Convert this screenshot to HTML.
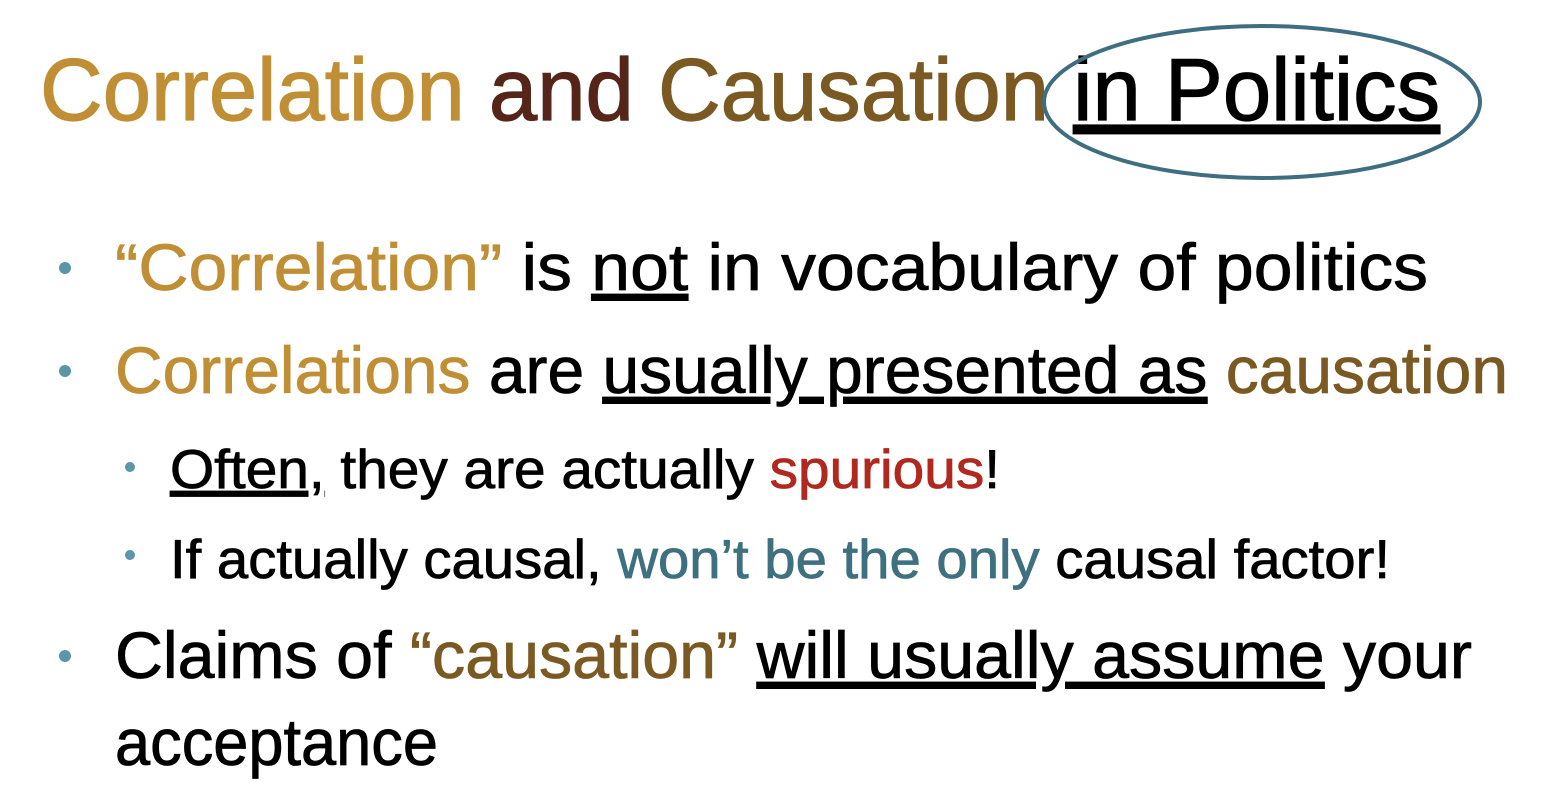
<!DOCTYPE html>
<html><head><meta charset="utf-8"><style>
html,body{margin:0;padding:0;background:#fff;width:1554px;height:798px;overflow:hidden}
svg{display:block}
text{font-family:"Liberation Sans",sans-serif}
.u{text-decoration:underline}
</style></head><body>
<svg width="1554" height="798" viewBox="0 0 1554 798">
<text x="40" y="120" font-size="88" stroke-width="1.2" textLength="1400" lengthAdjust="spacingAndGlyphs"><tspan fill="#C08F35" stroke="#C08F35">Correlation </tspan><tspan fill="#55251A" stroke="#55251A">and </tspan><tspan fill="#7A5A22" stroke="#7A5A22">Causation </tspan><tspan fill="#000" stroke="#000" class="u">in Politics</tspan></text>
<ellipse cx="1262" cy="102" rx="218" ry="76" fill="none" stroke="#3E6E80" stroke-width="4"/>
<g fill="#5A96A8"><circle cx="65" cy="268" r="6"/><circle cx="65" cy="371" r="6"/><circle cx="130" cy="467" r="5"/><circle cx="130" cy="555" r="5"/><circle cx="65" cy="656" r="6"/></g>
<g stroke-width="0.8">
<text x="115" y="290" font-size="66" textLength="1313" lengthAdjust="spacingAndGlyphs"><tspan fill="#C08F35" stroke="#C08F35">“Correlation”</tspan><tspan fill="#000" stroke="#000"> is </tspan><tspan fill="#000" stroke="#000" class="u">not</tspan><tspan fill="#000" stroke="#000"> in vocabulary of politics</tspan></text>
<text x="115" y="393" font-size="66" textLength="1393" lengthAdjust="spacingAndGlyphs"><tspan fill="#C08F35" stroke="#C08F35">Correlations</tspan><tspan fill="#000" stroke="#000"> are </tspan><tspan fill="#000" stroke="#000" class="u">usually presented as</tspan><tspan fill="#7A5A22" stroke="#7A5A22"> causation</tspan></text>
<text x="170" y="488" font-size="55" textLength="830" lengthAdjust="spacingAndGlyphs"><tspan fill="#000" stroke="#000" class="u">Often,</tspan><tspan fill="#000" stroke="#000"> they are actually </tspan><tspan fill="#B0281E" stroke="#B0281E">spurious</tspan><tspan fill="#000" stroke="#000">!</tspan></text>
<text x="170" y="578" font-size="55" textLength="1220" lengthAdjust="spacingAndGlyphs"><tspan fill="#000" stroke="#000">If actually causal, </tspan><tspan fill="#3E7080" stroke="#3E7080">won’t be the only</tspan><tspan fill="#000" stroke="#000"> causal factor!</tspan></text>
<text x="115" y="678" font-size="66" textLength="1357" lengthAdjust="spacingAndGlyphs"><tspan fill="#000" stroke="#000">Claims of </tspan><tspan fill="#7A5A22" stroke="#7A5A22">“causation”</tspan><tspan fill="#000" stroke="#000"> </tspan><tspan fill="#000" stroke="#000" class="u">will usually assume</tspan><tspan fill="#000" stroke="#000"> your</tspan></text>
<text x="115" y="765" font-size="66" textLength="323" lengthAdjust="spacingAndGlyphs" fill="#000" stroke="#000">acceptance</text>
</g>
</svg>
</body></html>
